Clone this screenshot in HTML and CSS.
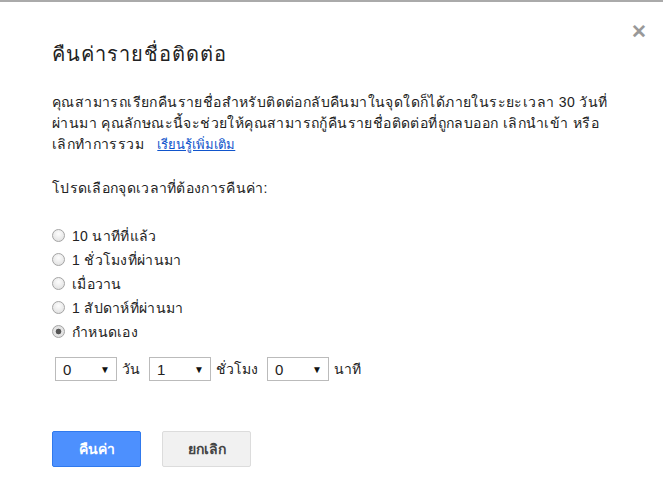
FILE: index.html
```html
<!DOCTYPE html>
<html lang="th">
<head>
  <meta charset="UTF-8">
  <title>คืนค่ารายชื่อติดต่อ</title>
  <link rel="stylesheet" href="styles.css">
</head>
<body>

  <div class="dialog">
    <span class="close">&#x2715;</span>

    <h1>คืนค่ารายชื่อติดต่อ</h1>

    <p class="intro">
      คุณสามารถเรียกคืนรายชื่อสำหรับติดต่อกลับคืนมาในจุดใดก็ได้ภายในระยะเวลา 30 วันที่<br>
      ผ่านมา คุณลักษณะนี้จะช่วยให้คุณสามารถกู้คืนรายชื่อติดต่อที่ถูกลบออก เลิกนำเข้า หรือ<br>
      เลิกทำการรวม <a href="#" class="more">เรียนรู้เพิ่มเติม</a>
    </p>

    <p class="ask">โปรดเลือกจุดเวลาที่ต้องการคืนค่า:</p>

    <div class="choices">
      <label class="choice"><input type="radio" name="when"> 10 นาทีที่แล้ว</label>
      <label class="choice"><input type="radio" name="when"> 1 ชั่วโมงที่ผ่านมา</label>
      <label class="choice"><input type="radio" name="when"> เมื่อวาน</label>
      <label class="choice"><input type="radio" name="when"> 1 สัปดาห์ที่ผ่านมา</label>
      <label class="choice"><input type="radio" name="when" checked> กำหนดเอง</label>
    </div>

    <div class="custom">
      <span class="pick">0 <i>&#9660;</i></span> <span class="unit">วัน</span>
      <span class="pick">1 <i>&#9660;</i></span> <span class="unit">ชั่วโมง</span>
      <span class="pick">0 <i>&#9660;</i></span> <span class="unit">นาที</span>
    </div>

    <div class="buttons">
      <button class="ok">คืนค่า</button>
      <button class="cancel">ยกเลิก</button>
    </div>
  </div>

</body>
</html>
```

FILE: styles.css
```css
body {
  margin: 0;
  background: #fff;
  font-family: Arial, "Liberation Sans", sans-serif;
  color: #222;
}

.dialog {
  position: relative;
  height: 500px;
  border-top: 2px solid #aaa;
  padding: 0 52px;
}

.close {
  position: absolute;
  top: 18px;
  right: 16px;
  color: #999;
  font-size: 19px;
  font-weight: bold;
}

h1 {
  margin: 0;
  padding-top: 36px;
  font-size: 20px;
  letter-spacing: 1px;
  font-weight: normal;
  color: #222;
}

.intro {
  margin: 22px 0 0;
  font-size: 14px;
  letter-spacing: 0.4px;
  line-height: 21px;
  white-space: nowrap;
}

.more {
  margin-left: 9px;
  color: #15c;
  font-size: 13px;
  letter-spacing: 0;
}

.ask {
  margin: 22px 0 0;
  font-size: 14px;
  letter-spacing: 0.3px;
}

.choices {
  margin-top: 27px;
  display: flex;
  flex-direction: column;
  gap: 5px;
}

.choice {
  display: flex;
  align-items: center;
  height: 19px;
  font-size: 14px;
  letter-spacing: 0.3px;
}

.choice input {
  appearance: none;
  margin: 0 7px 0 0;
  width: 13px;
  height: 13px;
  border-radius: 50%;
  border: 1px solid #a4a4a4;
  background: radial-gradient(circle at 50% 35%, #fdfdfd, #dcdcdc);
}

.choice input:checked {
  background: radial-gradient(circle, #555 0, #555 2.5px, #e6e6e6 3.2px, #dcdcdc);
}

.custom {
  margin-top: 16px;
  display: flex;
  align-items: center;
  font-size: 14px;
  padding-left: 3px;
}

.pick {
  display: inline-flex;
  justify-content: space-between;
  align-items: center;
  box-sizing: border-box;
  width: 62px;
  height: 24px;
  padding: 0 6px 0 7px;
  border: 1px solid #bbb;
  font-size: 15px;
}

.pick i {
  font-style: normal;
  font-size: 10px;
  color: #111;
}

.unit {
  margin: 0 9px 0 5px;
}

.buttons {
  margin-top: 50px;
  display: flex;
  gap: 21px;
}

button {
  width: 89px;
  height: 36px;
  border-radius: 2px;
  font-size: 14px;
  font-weight: bold;
  font-family: Arial, "Liberation Sans", sans-serif;
}

.ok {
  background: #4d90fe;
  border: 1px solid #3079ed;
  color: #fff;
}

.cancel {
  background: #f1f1f1;
  border: 1px solid #dcdcdc;
  color: #444;
}
```
